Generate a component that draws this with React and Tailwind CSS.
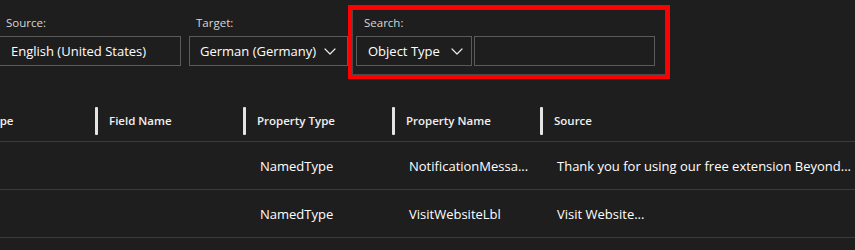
import React from 'react';

const font = { fontFamily: '"Open Sans", "Noto Sans", sans-serif' };

function Chevron() {
  return (
    <svg width="12" height="7" viewBox="0 0 12 7" fill="none" className="shrink-0">
      <path d="M1 1 L6 6 L11 1" stroke="#e8e8e8" strokeWidth="1.2" strokeLinecap="round" strokeLinejoin="round" />
    </svg>
  );
}

const columns = [
  { key: 'type', label: 'Type', width: 'w-[95px]', offset: '-ml-[27px]' },
  { key: 'field', label: 'Field Name', width: 'w-[148px]' },
  { key: 'ptype', label: 'Property Type', width: 'w-[149px]' },
  { key: 'pname', label: 'Property Name', width: 'w-[148px]' },
  { key: 'source', label: 'Source', width: 'flex-1' },
];

const rows = [
  { type: '', field: '', ptype: 'NamedType', pname: 'NotificationMessa...', source: 'Thank you for using our free extension Beyond...' },
  { type: '', field: '', ptype: 'NamedType', pname: 'VisitWebsiteLbl', source: 'Visit Website...' },
];

export default function App() {
  return (
    <div className="w-[855px] h-[250px] overflow-hidden bg-[#1f1e1e] text-white" style={font}>
      {/* Filter bar */}
      <div className="flex items-start h-[100px]">
        <div className="flex flex-col pt-[15px] w-[189px] shrink-0">
          <span className="text-[11.5px] leading-[16px] text-[#d6d6d6] pl-[6px]">Source:</span>
          <div className="mt-[5px] h-[30px] w-[181px] border-y border-r border-[#5a5a5a] flex items-center pl-[11px] text-[13px] leading-none whitespace-nowrap">
            English (United States)
          </div>
        </div>
        <div className="flex flex-col pt-[15px] w-[159px] shrink-0">
          <span className="text-[11.5px] leading-[16px] text-[#d6d6d6] pl-[7px]">Target:</span>
          <div className="mt-[5px] h-[30px] w-[159px] border border-[#5a5a5a] flex items-center justify-between pl-[10px] pr-[11px] text-[13px] leading-none whitespace-nowrap">
            <span>German (Germany)</span>
            <Chevron />
          </div>
        </div>
        <div className="mt-[5px] border-4 border-[#ff0000] shrink-0">
          <div className="border border-[#4a4a4a] pt-[5px] pb-[8px] pl-[3px] pr-[10px] flex flex-col">
            <span className="text-[11.5px] leading-[16px] text-[#d6d6d6] pl-[8px]">Search:</span>
            <div className="mt-[5px] flex gap-[2px]">
              <div className="h-[30px] w-[116px] border border-[#5a5a5a] flex items-center justify-between pl-[11px] pr-[8px] text-[13px] leading-none whitespace-nowrap">
                <span>Object Type</span>
                <Chevron />
              </div>
              <div className="h-[30px] w-[181px] border border-[#5a5a5a]" />
            </div>
          </div>
        </div>
      </div>

      {/* Table */}
      <div className="flex h-[42px] items-center border-b border-[#3c3b3b]">
        {columns.map((c) => (
          <div key={c.key} className={`${c.width} shrink-0 flex items-center overflow-hidden`}>
            <div className={`flex items-center ${c.offset || ''}`}>
              <div className="w-[3px] h-[28px] rounded-[1px] bg-[#e4e4e4] shrink-0" />
              <span className="pl-[11px] text-[11.5px] font-semibold text-[#f0f0f0] whitespace-nowrap">{c.label}</span>
            </div>
          </div>
        ))}
      </div>
      {rows.map((r, i) => (
        <div key={i} className="flex h-[48px] items-center pt-[2px] border-b border-[#3c3b3b]">
          {columns.map((c) => (
            <div key={c.key} className={`${c.width} shrink-0 pl-[17px] text-[13px] whitespace-nowrap overflow-hidden`}>
              {r[c.key]}
            </div>
          ))}
        </div>
      ))}
    </div>
  );
}
